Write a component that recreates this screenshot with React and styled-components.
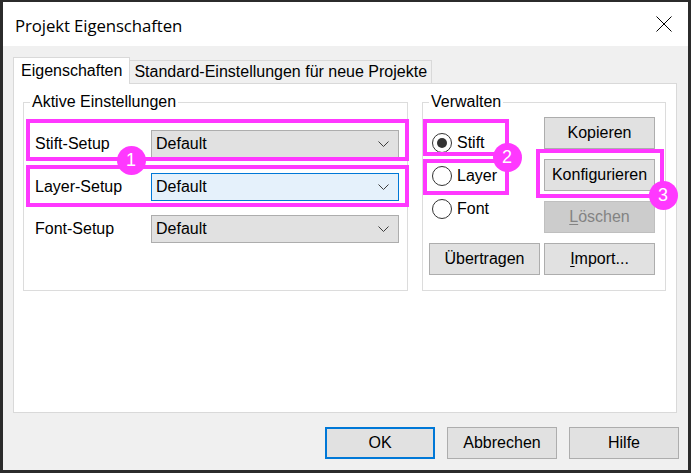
import React from "react";
import styled, { createGlobalStyle } from "styled-components";

const GlobalStyle = createGlobalStyle`
	html, body {
		margin: 0;
		padding: 0;
		background: #ffffff;
	}
	* {
		box-sizing: border-box;
	}
`;

const MAGENTA = "#ff38ff";

export default function App() {
	return (
		<>
			<GlobalStyle />
			<Window>
				<TitleBar>
					<Title>Projekt Eigenschaften</Title>
					<CloseButton aria-label="Schließen">
						<svg width="16" height="16" viewBox="0 0 16 16">
							<path d="M0.5 0.5 L15.5 15.5 M15.5 0.5 L0.5 15.5" stroke="#000" strokeWidth="1" fill="none" />
						</svg>
					</CloseButton>
				</TitleBar>

				<Body>
					<TabRow>
						<Tab $active>Eigenschaften</Tab>
						<Tab>Standard-Einstellungen für neue Projekte</Tab>
					</TabRow>

					<Panel>
						<Group>
							<Legend>Aktive Einstellungen</Legend>
							<SetupList>
								<SetupRow>
									<FieldLabel>Stift-Setup</FieldLabel>
									<Combo value="Default" />
								</SetupRow>
								<SetupRow>
									<FieldLabel>Layer-Setup</FieldLabel>
									<Combo value="Default" focused />
								</SetupRow>
								<SetupRow>
									<FieldLabel>Font-Setup</FieldLabel>
									<Combo value="Default" />
								</SetupRow>
							</SetupList>
						</Group>

						<Group>
							<Legend>Verwalten</Legend>
							<ManageGrid>
								<RadioList>
									<Radio label="Stift" checked />
									<Radio label="Layer" />
									<Radio label="Font" />
								</RadioList>
								<Button>Kopieren</Button>
								<Button>Konfigurieren</Button>
								<Button disabled>
									<u>L</u>öschen
								</Button>
								<Button>Übertragen</Button>
								<Button>
									<u>I</u>mport...
								</Button>
							</ManageGrid>
						</Group>
					</Panel>

					<Footer>
						<Button $wide $default>OK</Button>
						<Button $wide>Abbrechen</Button>
						<Button $wide>Hilfe</Button>
					</Footer>
				</Body>

				<Annotations>
					<Mark $x={26} $y={119} $w={383} $h={42} />
					<Mark $x={26} $y={165} $w={383} $h={42} />
					<Mark $x={423} $y={119} $w={86} $h={37} />
					<Mark $x={423} $y={159} $w={86} $h={36} />
					<Mark $x={536} $y={149} $w={128} $h={49} />
					<Badge $x={131} $y={160}>1</Badge>
					<Badge $x={507} $y={157}>2</Badge>
					<Badge $x={663} $y={195}>3</Badge>
				</Annotations>
			</Window>
		</>
	);
}

function Combo({ value, focused }) {
	return (
		<ComboBox $focused={focused}>
			<span>{value}</span>
			<svg width="11" height="6" viewBox="0 0 11 6">
				<path d="M0.5 0.5 L5.5 5.5 L10.5 0.5" stroke="#3c3c3c" strokeWidth="1" fill="none" />
			</svg>
		</ComboBox>
	);
}

function Radio({ label, checked }) {
	return (
		<RadioItem>
			<RadioCircle $checked={checked} />
			<span>{label}</span>
		</RadioItem>
	);
}

const Window = styled.div`
	position: relative;
	width: 691px;
	height: 473px;
	display: flex;
	flex-direction: column;
	border-style: solid;
	border-color: #2b2b2b;
	border-width: 2px 3px 3px 3px;
	font-family: "Liberation Sans", Arial, sans-serif;
	font-size: 16px;
	color: #000;
	overflow: hidden;
`;

const TitleBar = styled.div`
	height: 44px;
	flex-shrink: 0;
	display: flex;
	align-items: center;
	justify-content: space-between;
	padding: 0 16px 0 12px;
	background: #ffffff;
`;

const Title = styled.div`
	font-family: "Open Sans", "Noto Sans", sans-serif;
	font-size: 16.8px;
	letter-spacing: -0.1px;
	padding-top: 2px;
`;

const CloseButton = styled.div`
	display: flex;
	width: 16px;
	height: 16px;
`;

const Body = styled.div`
	flex: 1;
	display: flex;
	flex-direction: column;
	background: #f0f0f0;
	padding: 11px 9px 0 10px;
`;

const TabRow = styled.div`
	display: flex;
	align-items: flex-end;
	height: 27px;
	margin-bottom: -1px;
	position: relative;
	z-index: 1;
`;

const Tab = styled.div`
	display: flex;
	align-items: center;
	height: ${(p) => (p.$active ? "27px" : "24px")};
	padding: ${(p) => (p.$active ? "0 7px 0 7px" : "0 4px 0 4px")};
	background: ${(p) => (p.$active ? "#ffffff" : "#f0f0f0")};
	border: 1px solid #d9d9d9;
	border-bottom: ${(p) => (p.$active ? "none" : "1px solid #d9d9d9")};
	margin-left: ${(p) => (p.$active ? "0" : "-1px")};
	white-space: nowrap;
`;

const Panel = styled.div`
	height: 330px;
	margin-right: 2px;
	background: #ffffff;
	border: 1px solid #d9d9d9;
	padding: 9px 10px 0 9px;
	display: grid;
	grid-template-columns: 385px 244px;
	grid-template-rows: 198px;
	column-gap: 14px;
	align-items: start;
`;

const Group = styled.fieldset`
	margin: 0;
	padding: 0;
	min-width: 0;
	height: 198px;
	border: 1px solid #dcdcdc;
`;

const Legend = styled.legend`
	margin-left: 6px;
	padding: 0 2px;
	line-height: 18px;
`;

const SetupList = styled.div`
	display: flex;
	flex-direction: column;
	gap: 14.5px;
	padding: 19px 7px 0 11px;
`;

const SetupRow = styled.div`
	display: grid;
	grid-template-columns: 116px 248px;
	align-items: center;
`;

const FieldLabel = styled.span`
	white-space: nowrap;
`;

const ComboBox = styled.div`
	height: 28px;
	display: flex;
	align-items: center;
	justify-content: space-between;
	padding: 0 9px 0 4px;
	background: ${(p) => (p.$focused ? "#e5f1fb" : "#e1e1e1")};
	border: 1px solid ${(p) => (p.$focused ? "#0078d7" : "#adadad")};
`;

const ManageGrid = styled.div`
	display: grid;
	grid-template-columns: 111px 111px;
	grid-auto-rows: 32px;
	column-gap: 4px;
	row-gap: 10px;
	padding: 6px 0 0 6px;

	& > :first-child {
		grid-column: 1;
		grid-row: 1 / span 3;
	}
	& > :nth-child(2),
	& > :nth-child(3),
	& > :nth-child(4) {
		grid-column: 2;
	}
`;

const RadioList = styled.div`
	display: flex;
	flex-direction: column;
	padding-top: 9px;
`;

const RadioItem = styled.div`
	height: 33px;
	display: flex;
	align-items: center;
	gap: 5px;
	padding-left: 3px;
`;

const RadioCircle = styled.span`
	width: 20px;
	height: 20px;
	border-radius: 50%;
	border: 1px solid #333;
	background: #ffffff;
	display: flex;
	align-items: center;
	justify-content: center;

	&::after {
		content: "";
		display: ${(p) => (p.$checked ? "block" : "none")};
		width: 10px;
		height: 10px;
		border-radius: 50%;
		background: #333;
	}
`;

const Button = styled.button`
	font: inherit;
	color: ${(p) => (p.disabled ? "#838383" : "#000")};
	width: ${(p) => (p.$wide ? "110px" : "auto")};
	height: 32px;
	padding: 0;
	background: ${(p) => (p.disabled ? "#cccccc" : "#e1e1e1")};
	border: ${(p) =>
		p.$default ? "2px solid #0078d7" : p.disabled ? "1px solid #bfbfbf" : "1px solid #adadad"};
	border-radius: 0;
	white-space: nowrap;

	u {
		text-decoration-thickness: 1px;
		text-underline-offset: 2px;
	}
`;

const Footer = styled.div`
	display: flex;
	justify-content: flex-end;
	gap: 12px;
	margin-top: 14px;
`;

const Annotations = styled.div`
	position: absolute;
	top: -2px;
	left: -3px;
	width: 691px;
	height: 473px;
	pointer-events: none;
	z-index: 5;
`;

const Mark = styled.div`
	position: absolute;
	left: ${(p) => p.$x}px;
	top: ${(p) => p.$y}px;
	width: ${(p) => p.$w}px;
	height: ${(p) => p.$h}px;
	border: 4px solid ${MAGENTA};
`;

const Badge = styled.div`
	position: absolute;
	left: ${(p) => p.$x - 14.5}px;
	top: ${(p) => p.$y - 14.5}px;
	width: 29px;
	height: 29px;
	border-radius: 50%;
	background: ${MAGENTA};
	color: #ffffff;
	font-family: "Liberation Sans", Arial, sans-serif;
	font-size: 18px;
	display: flex;
	align-items: center;
	justify-content: center;
`;
